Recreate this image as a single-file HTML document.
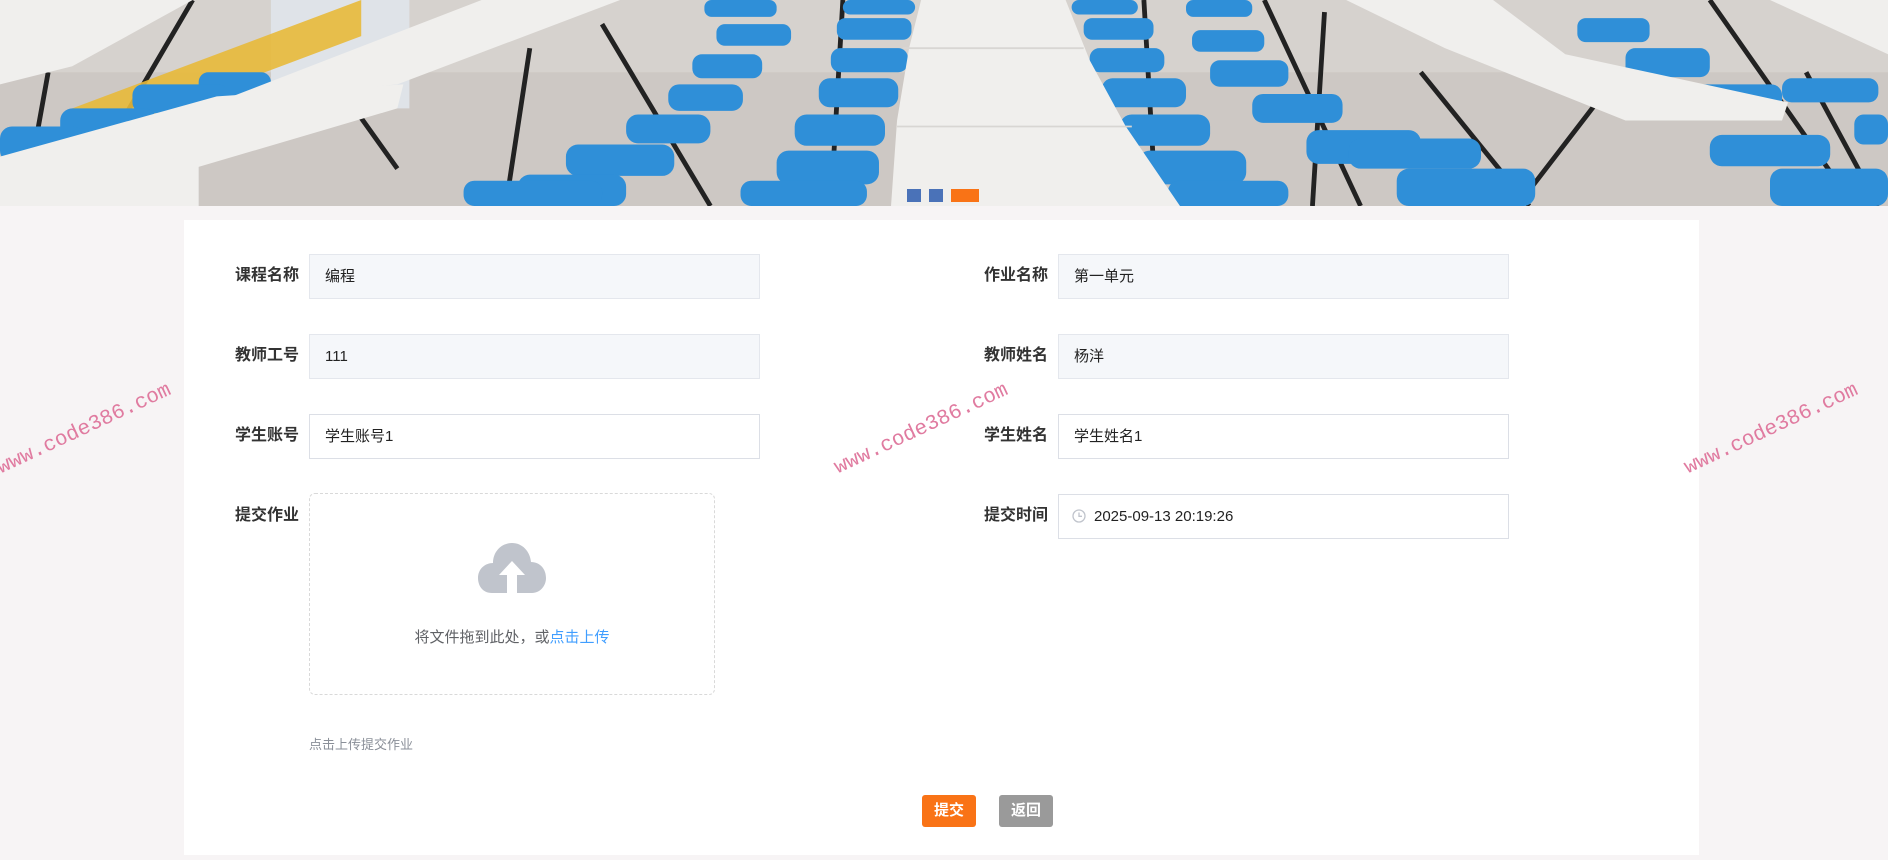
<!DOCTYPE html>
<html><head><meta charset="utf-8">
<style>
*{margin:0;padding:0;box-sizing:border-box}
html,body{width:1888px;height:860px;overflow:hidden;background:#f7f4f5;font-family:"Liberation Sans","Noto Sans CJK SC",sans-serif}
.banner{position:absolute;left:0;top:0;width:1888px;height:206px}
.dot{position:absolute;top:189px;height:13px}
.card{position:absolute;left:184px;top:220px;width:1515px;height:635px;background:#fff}
.lab{position:absolute;font-size:16px;font-weight:bold;color:#333;line-height:20px}
.inp{position:absolute;height:45px;border:1px solid #dcdfe6;background:#fff;font-size:15px;color:#222;line-height:43px;padding-left:15px}
.dis{background:#f5f7fa;border-color:#e4e7ed}
.wm{position:absolute;font-family:"Liberation Mono",monospace;font-size:21px;color:#e07ba0;transform:rotate(-25deg);transform-origin:center;white-space:nowrap}
.btn{position:absolute;top:795px;height:32px;width:54px;border-radius:3px;color:#fff;font-size:15px;font-weight:bold;text-align:center;line-height:32px}
</style></head><body>
<svg class="banner" viewBox="0 0 1568 171" preserveAspectRatio="none">
<rect width="1568" height="171" fill="#d6d2ce"/>
<rect y="60" width="1568" height="111" fill="#cdc8c4"/>
<g stroke="#222" stroke-width="4" fill="none">
<path d="M160 0 L60 171 M230 0 L330 140 M500 20 L590 171 M440 40 L420 171 M1050 0 L1130 171 M1180 60 L1270 171 M1330 80 L1260 171 M1420 0 L1540 171 M1500 60 L1560 171 M40 60 L20 171 M1100 10 L1090 171 M700 0 L690 171 M950 0 L960 171"/>
</g>
<polygon points="225,0 340,0 340,90 225,90" fill="#dfe3e8"/>
<polygon points="60,90 300,0 300,30 60,120" fill="#e8b93a" opacity=".9"/>
<g fill="#2f8fd8">
<rect x="585" y="0" width="60" height="14" rx="6"/><rect x="595" y="20" width="62" height="18" rx="7"/><rect x="575" y="45" width="58" height="20" rx="8"/><rect x="555" y="70" width="62" height="22" rx="9"/><rect x="520" y="95" width="70" height="24" rx="10"/><rect x="470" y="120" width="90" height="26" rx="10"/><rect x="430" y="145" width="90" height="26" rx="10"/>
<rect x="385" y="150" width="115" height="21" rx="9"/>
<rect x="700" y="0" width="60" height="12" rx="6"/><rect x="695" y="15" width="62" height="18" rx="7"/><rect x="690" y="40" width="64" height="20" rx="8"/><rect x="680" y="65" width="66" height="24" rx="9"/><rect x="660" y="95" width="75" height="26" rx="10"/><rect x="645" y="125" width="85" height="28" rx="10"/><rect x="615" y="150" width="105" height="21" rx="9"/>
<rect x="890" y="0" width="55" height="12" rx="6"/><rect x="900" y="15" width="58" height="18" rx="7"/><rect x="905" y="40" width="62" height="20" rx="8"/><rect x="915" y="65" width="70" height="24" rx="9"/><rect x="930" y="95" width="75" height="26" rx="10"/><rect x="945" y="125" width="90" height="28" rx="10"/><rect x="970" y="150" width="100" height="21" rx="9"/>
<rect x="985" y="0" width="55" height="14" rx="6"/><rect x="990" y="25" width="60" height="18" rx="7"/><rect x="1005" y="50" width="65" height="22" rx="8"/><rect x="1040" y="78" width="75" height="24" rx="9"/><rect x="1085" y="108" width="95" height="28" rx="10"/><rect x="1120" y="115" width="110" height="25" rx="10"/><rect x="1160" y="140" width="115" height="31" rx="10"/>
<rect x="1310" y="15" width="60" height="20" rx="7"/><rect x="1350" y="40" width="70" height="24" rx="8"/><rect x="1400" y="70" width="80" height="24" rx="9"/><rect x="1420" y="112" width="100" height="26" rx="10"/><rect x="1470" y="140" width="98" height="31" rx="10"/><rect x="1480" y="65" width="80" height="20" rx="8"/><rect x="1540" y="95" width="28" height="25" rx="8"/>
<rect x="165" y="60" width="60" height="22" rx="8"/><rect x="110" y="70" width="80" height="24" rx="9"/><rect x="50" y="90" width="80" height="26" rx="10"/><rect x="0" y="105" width="70" height="30" rx="10"/><rect x="0" y="40" width="40" height="20" rx="8"/>
</g>
<g fill="#f0efed">
<polygon points="400,0 515,0 330,70 180,85"/>
<polygon points="180,80 335,70 330,90 160,140 0,150 0,130"/>
<polygon points="0,140 165,130 165,171 0,171"/>
<polygon points="765,0 885,0 905,50 935,105 980,171 740,171 745,100 755,40"/>
<polygon points="1118,0 1240,0 1300,45 1485,85 1480,100 1350,100 1200,40"/>
<polygon points="1470,0 1568,0 1568,45"/>
<polygon points="0,0 160,0 60,55 0,70"/>
</g>
<g stroke="#d8d6d3" stroke-width="1.5"><line x1="750" y1="40" x2="900" y2="40"/><line x1="745" y1="105" x2="940" y2="105"/></g>
</svg>
<div class="dot" style="left:907px;width:14px;background:#4a72b8"></div>
<div class="dot" style="left:929px;width:14px;background:#4a72b8"></div>
<div class="dot" style="left:951px;width:28px;background:#f97316"></div>

<div class="card"></div>

<div class="lab" style="left:235px;top:266px">课程名称</div>
<div class="inp dis" style="left:309px;top:254px;width:451px">编程</div>
<div class="lab" style="left:984px;top:266px">作业名称</div>
<div class="inp dis" style="left:1058px;top:254px;width:451px">第一单元</div>

<div class="lab" style="left:235px;top:346px">教师工号</div>
<div class="inp dis" style="left:309px;top:334px;width:451px">111</div>
<div class="lab" style="left:984px;top:346px">教师姓名</div>
<div class="inp dis" style="left:1058px;top:334px;width:451px">杨洋</div>

<div class="lab" style="left:235px;top:426px">学生账号</div>
<div class="inp" style="left:309px;top:414px;width:451px">学生账号1</div>
<div class="lab" style="left:984px;top:426px">学生姓名</div>
<div class="inp" style="left:1058px;top:414px;width:451px">学生姓名1</div>

<div class="lab" style="left:235px;top:506px">提交作业</div>
<div style="position:absolute;left:309px;top:493px;width:406px;height:202px;border:1px dashed #d9d9d9;border-radius:6px"></div>
<svg style="position:absolute;left:478px;top:541px" width="68" height="54" viewBox="0 0 68 54">
<path d="M14 52 C4 52 0 44 0 37 C0 28 7 22 15 22 C15 10 24 2 34 2 C44 2 52 10 53 21 C62 21 68 28 68 37 C68 45 62 52 54 52 Z" fill="#c0c4cc"/>
<path d="M34 20 L47 34 L39 34 L39 54 L29 54 L29 34 L21 34 Z" fill="#fff"/>
</svg>
<div style="position:absolute;left:309px;top:626px;width:406px;text-align:center;font-size:15px;color:#606266">将文件拖到此处，或<span style="color:#409eff">点击上传</span></div>
<div style="position:absolute;left:309px;top:734px;font-size:13px;color:#8a8f98">点击上传提交作业</div>

<div class="lab" style="left:984px;top:506px">提交时间</div>
<div class="inp" style="left:1058px;top:494px;width:451px;padding-left:35px">2025-09-13 20:19:26</div>
<svg style="position:absolute;left:1072px;top:509px" width="14" height="14" viewBox="0 0 14 14"><circle cx="7" cy="7" r="6" fill="none" stroke="#c0c4cc" stroke-width="1.3"/><path d="M7 3.5V7.3H10" fill="none" stroke="#c0c4cc" stroke-width="1.3"/></svg>

<div class="btn" style="left:922px;background:#f97316">提交</div>
<div class="btn" style="left:999px;background:#9a9a9a">返回</div>

<div class="wm" style="left:-10px;top:418px">www.code386.com</div>
<div class="wm" style="left:827px;top:418px">www.code386.com</div>
<div class="wm" style="left:1677px;top:418px">www.code386.com</div>
</body></html>
